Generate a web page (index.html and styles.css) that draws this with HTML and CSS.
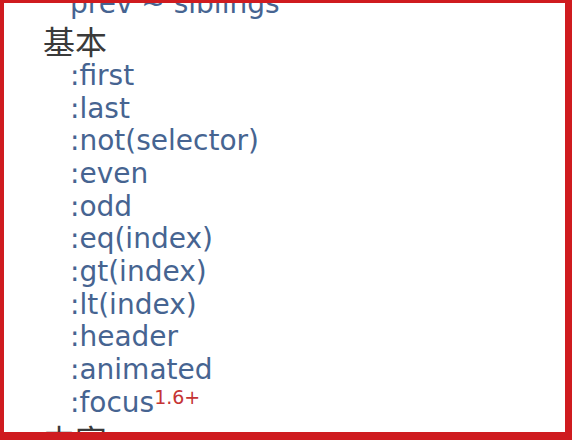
FILE: index.html
```html
<!DOCTYPE html>
<html lang="zh">
<head>
<meta charset="utf-8">
<title>选择器</title>
<link rel="stylesheet" href="styles.css">
</head>
<body>
<div class="frame">
  <ul class="tree">
    <li class="item prev">prev ~ siblings</li>
    <li class="group">
      <div class="head">基本</div>
      <ul class="sub">
        <li class="item">:first</li>
        <li class="item">:last</li>
        <li class="item">:not(selector)</li>
        <li class="item">:even</li>
        <li class="item">:odd</li>
        <li class="item">:eq(index)</li>
        <li class="item">:gt(index)</li>
        <li class="item">:lt(index)</li>
        <li class="item">:header</li>
        <li class="item">:animated</li>
        <li class="item">:focus<sup class="ver">1.6+</sup></li>
      </ul>
    </li>
    <li class="group">
      <div class="head">内容</div>
    </li>
  </ul>
</div>
</body>
</html>
```

FILE: styles.css
```css
html, body {
  margin: 0;
  padding: 0;
  background: #ffffff;
}

.frame {
  box-sizing: border-box;
  width: 572px;
  height: 440px;
  border-style: solid;
  border-color: #cf1b1f;
  border-width: 3px 7px 8px 4px;
  overflow: hidden;
  background: #ffffff;
}

.tree {
  list-style: none;
  margin: -15px 0 0 0;
  padding: 0 0 0 39px;
}

.sub {
  list-style: none;
  margin: 0;
  padding: 0 0 0 27px;
}

.item {
  font-family: "DejaVu Sans", "Noto Sans CJK SC", sans-serif;
  font-size: 28px;
  line-height: 32.7px;
  height: 32.7px;
  color: #466491;
  white-space: nowrap;
}

.prev {
  padding-left: 27px;
}

.head {
  font-family: "Noto Sans CJK SC", "DejaVu Sans", sans-serif;
  font-size: 32px;
  line-height: 39.3px;
  height: 39.3px;
  color: #3a3a3a;
  white-space: nowrap;
}

.ver {
  font-size: 19px;
  line-height: 0;
  vertical-align: 8px;
  color: #c53434;
}
```
